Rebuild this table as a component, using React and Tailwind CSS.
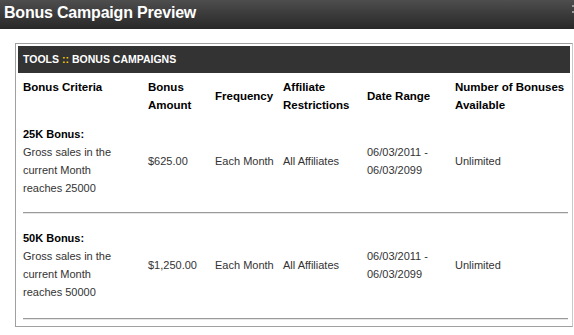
const cols = 'grid grid-cols-[125px_67px_68px_84px_88px_1fr] items-center'

const rows = [
  {
    title: '25K Bonus:',
    lines: ['Gross sales in the', 'current Month', 'reaches 25000'],
    amount: '$625.00',
    pt: 'pt-[11px]',
    mt: 'mt-[15px]',
  },
  {
    title: '50K Bonus:',
    lines: ['Gross sales in the', 'current Month', 'reaches 50000'],
    amount: '$1,250.00',
    pt: 'pt-[15px]',
    mt: 'mt-[17px]',
  },
]

function BonusRow({ title, lines, amount, pt, mt }) {
  return (
    <div className={pt}>
      <div className={`${cols} text-[11px] leading-[18px] text-[#333]`}>
        <div>
          <div className="font-bold text-black">{title}</div>
          {lines.map((l) => <div key={l}>{l}</div>)}
        </div>
        <div>{amount}</div>
        <div>Each Month</div>
        <div>All Affiliates</div>
        <div>
          <div>06/03/2011 -</div>
          <div>06/03/2099</div>
        </div>
        <div>Unlimited</div>
      </div>
      <div className={`${mt} border-t border-b border-t-[#9a9a9a] border-b-[#e6e6e6]`} />
    </div>
  )
}

export default function App() {
  return (
    <div className="relative w-[574px] h-[335px] bg-white overflow-hidden font-['Liberation_Sans',Arial,sans-serif]">
      {/* Dialog title bar */}
      <div className="h-[29px] flex items-center pl-[4px] pb-[3px] bg-gradient-to-b from-[#4e4e4e] to-[#282828]">
        <span className="text-white font-bold text-[16px] tracking-[-0.2px]">Bonus Campaign Preview</span>
      </div>
      <div className="absolute left-[572px] top-[5px] flex flex-col gap-[4px]">
        <span className="w-[2px] h-[2px] bg-[#9a9a9a]" />
        <span className="w-[2px] h-[2px] bg-[#9a9a9a]" />
      </div>

      {/* Panel */}
      <div className="ml-[15px] mt-[14px] w-[558px] border border-[#a0a0a0] border-r-[#c8c8c8] p-[2px] pb-[6px]">
        <div className="h-[27px] flex items-center pl-[5px] bg-[#333] text-white font-bold text-[10.5px]">
          TOOLS <span className="text-[#ffcc00] mx-[3px]">::</span> BONUS CAMPAIGNS
        </div>
        <div className="pl-[5px] pr-[2px]">
          <div className={`${cols} pt-[5px] text-[11.5px] leading-[18px] font-bold text-black`}>
            <div className="self-start">Bonus Criteria</div>
            <div>Bonus<br />Amount</div>
            <div>Frequency</div>
            <div>Affiliate<br />Restrictions</div>
            <div>Date Range</div>
            <div>Number of Bonuses<br />Available</div>
          </div>
          {rows.map((r) => <BonusRow key={r.title} {...r} />)}
        </div>
      </div>
    </div>
  )
}
